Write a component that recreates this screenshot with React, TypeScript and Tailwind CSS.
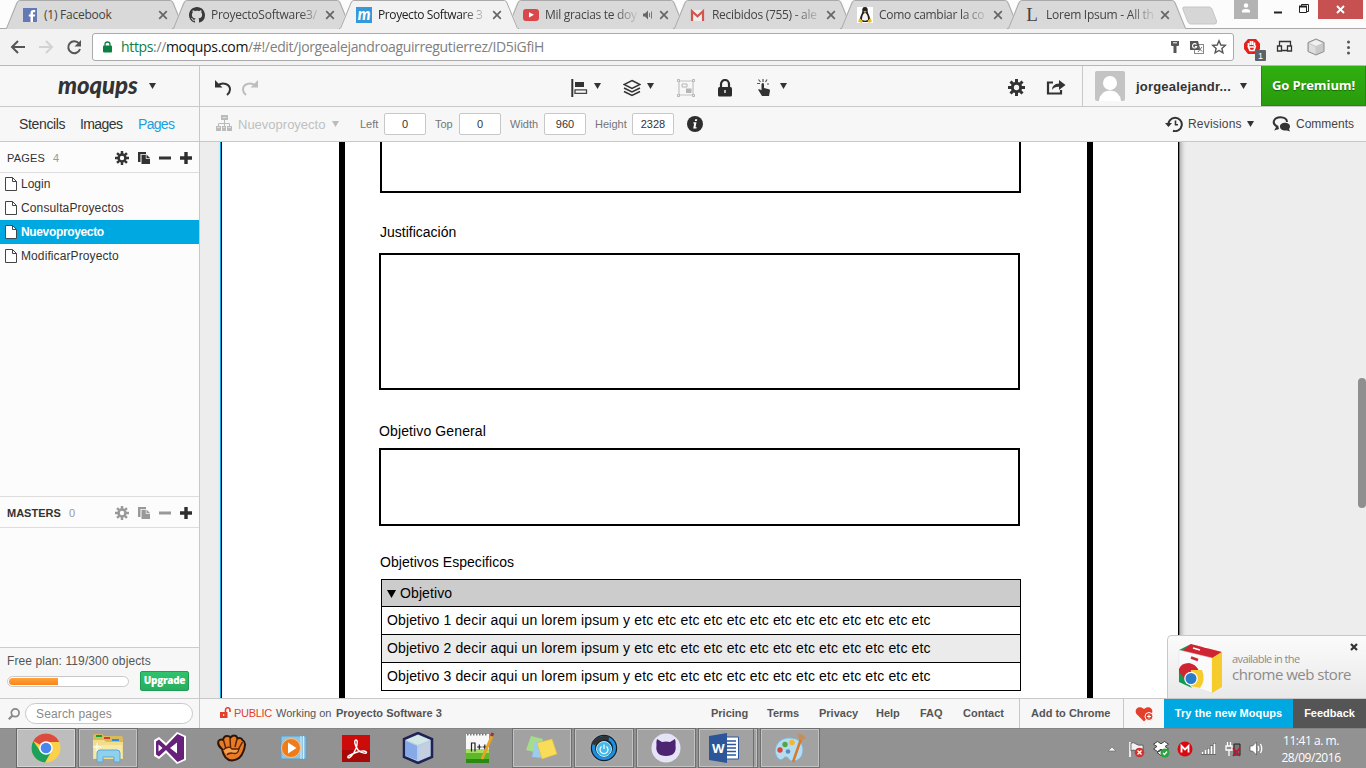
import React from "react";

type P = { children?: React.ReactNode };

const Svg = ({ w, h, children, cls = "" }: { w: number; h: number; cls?: string } & P) => (
  <svg width={w} height={h} viewBox={`0 0 ${w} ${h}`} fill="none" className={`block shrink-0 ${cls}`}>
    {children}
  </svg>
);

/* ---------- browser chrome ---------- */

const FacebookIcon = () => (
  <Svg w={16} h={16}>
    <rect x="1" y="1" width="14" height="14" fill="#6379b5" />
    <path d="M8.500 15V9.600H6.800V7.400h1.700V6c0-2 1-3 3-3h1.700v2.200h-1.200c-.8 0-1 .4-1 1v1.200h2.200l-.3 2.200h-1.900V15z" fill="#fff" />
  </Svg>
);
const GithubIcon = () => (
  <svg width="16" height="16" viewBox="0 0 16 16" className="block shrink-0" fill="#3a3a3a">
    <path d="M8 0C3.580 0 0 3.580 0 8c0 3.540 2.290 6.530 5.470 7.590.4.070.55-.17.55-.38 0-.19-.01-.82-.01-1.490-2.010.37-2.530-.49-2.690-.94-.09-.23-.48-.94-.82-1.130-.28-.15-.68-.52-.01-.53.63-.01 1.080.58 1.230.82.72 1.210 1.870.87 2.330.66.070-.52.28-.87.51-1.070-1.780-.2-3.640-.89-3.640-3.950 0-.87.31-1.590.82-2.150-.08-.2-.36-1.020.08-2.120 0 0 .67-.21 2.200.82.64-.18 1.320-.27 2-.27s1.360.09 2 .27c1.530-1.040 2.200-.82 2.200-.82.44 1.100.16 1.920.08 2.120.51.56.82 1.270.82 2.150 0 3.070-1.870 3.750-3.650 3.950.29.25.54.73.54 1.480 0 1.070-.01 1.930-.01 2.200 0 .21.15.46.55.38A8.010 8.010 0 0 0 16 8c0-4.420-3.580-8-8-8z" />
  </svg>
);
const MoqIcon = () => (
  <span className="flex h-4 w-4 shrink-0 items-center justify-center bg-[#3498db] pb-[2px] font-['Lato'] text-[16px] leading-none font-black text-white italic">m</span>
);
const YoutubeIcon = () => (
  <Svg w={16} h={16}>
    <rect x="0" y="2" width="16" height="12" rx="3" fill="#d9474b" />
    <path d="M6 5.200v5.200L11 7.800z" fill="#fff" />
  </Svg>
);
const GmailIcon = () => (
  <Svg w={16} h={16}>
    <path d="M1 3h13v11H1z" fill="#eee" />
    <path d="M2 14V4.200l5.500 5 5.500-5V14" stroke="#d1564c" strokeWidth="2.200" />
  </Svg>
);
const TuxIcon = () => (
  <Svg w={16} h={16}>
    <rect width="16" height="16" fill="#fff" />
    <path d="M8 0C5.500 0 5 2 5.300 4.500 5 7 3 8.500 3 12l2.500 3h5L13 12c0-3.500-2-5-2.300-7.500C11 2 10.500 0 8 0z" fill="#222" />
    <path d="M8 6c-2 0-3 4-3 6.500C5.500 14 10.500 14 11 12.500 11 10 10 6 8 6z" fill="#f5f5f5" />
    <path d="M6.300 4.500 8 6l1.700-1.500L8 3.800z" fill="#e8a713" />
    <path d="M1 14.500 2.500 11l3.500 3-1.500 2zM15 14.500 13.500 11 10.500 14l1.500 2z" fill="#f1bb1a" />
  </Svg>
);
const LIcon = () => (
  <span className="flex h-4 w-4 shrink-0 items-center justify-center font-['Liberation_Serif'] text-[19px] leading-none text-[#444]">L</span>
);

const Tab = ({ icon, text, active, sound, cls }: { icon: React.ReactNode; text: string; active?: boolean; sound?: boolean; cls: string }) => (
  <div className={`relative -mr-[13px] flex h-[29px] w-[180px] shrink-0 items-center pl-[17px] ${active ? "z-10" : ""}`}>
    <svg width="180" height="29" viewBox="0 0 180 29" className="absolute top-0 left-0" fill="none">
      <path d="M1 28.500 11 3Q12 .5 14 .5H166Q168 .5 169 3L179 28.500V29H1z" fill={active ? "#f2f2f2" : "#d9d9d9"} />
      <path d="M0 28.500H1.500L12 3Q13 .5 14.500 .5H165.500Q167 .5 168 3L178.500 28.500H180" stroke="#a9a9a9" />
      {active && <path d="M1.500 28.500H178.500" stroke="#f2f2f2" />}
    </svg>
    <div className="relative">{icon}</div>
    <div className={`relative ml-[6px] shrink-0 whitespace-nowrap font-['Open_Sans'] text-[12px] leading-[18px] ${sound ? "w-[92px]" : "w-[109px]"} ${active ? "text-[#222]" : "text-[#444]"}`}>
      <span className={cls}>{text}</span>
    </div>
    {sound && (
      <Svg w={12} h={10} cls="relative ml-[5px]">
        <path d="M1 3.500h2L6 .5v9L3 6.500H1z" fill="#666" />
        <path d="M7.500 3v4M9.500 1.500v7" stroke="#777" />
      </Svg>
    )}
    <Svg w={10} h={10} cls="relative ml-[5px]">
      <path d="M1.200 1.200 8.800 8.800M8.800 1.200 1.200 8.800" stroke="#666" strokeWidth="1.700" />
    </Svg>
  </div>
);

const TabStrip = () => (
  <div className="flex h-[29px] items-start border-b border-[#a9a9a9] bg-[#fcfcfc]">
    <div className="flex pl-[5px]">
      <Tab icon={<FacebookIcon />} text="(1) Facebook" cls="tracking-[-0.25px]" />
      <Tab icon={<GithubIcon />} text="ProyectoSoftware3/" cls="tracking-[-0.25px] [mask-image:linear-gradient(to_right,#000_85%,rgba(0,0,0,0.2))]" />
      <Tab icon={<MoqIcon />} text="Proyecto Software 3" active cls="tracking-[-0.4px] [mask-image:linear-gradient(to_right,#000_80%,rgba(0,0,0,0.2))]" />
      <Tab icon={<YoutubeIcon />} text="Mil gracias te doy" sound cls="tracking-[-0.3px] [mask-image:linear-gradient(to_right,#000_75%,rgba(0,0,0,0.1))]" />
      <Tab icon={<GmailIcon />} text="Recibidos (755) - ale" cls="tracking-[-0.3px] [mask-image:linear-gradient(to_right,#000_78%,rgba(0,0,0,0.2))]" />
      <Tab icon={<TuxIcon />} text="Como cambiar la co" cls="tracking-[-0.3px] [mask-image:linear-gradient(to_right,#000_78%,rgba(0,0,0,0.2))]" />
      <Tab icon={<LIcon />} text="Lorem Ipsum - All th" cls="tracking-[-0.25px] [mask-image:linear-gradient(to_right,#000_78%,rgba(0,0,0,0.1))]" />
    </div>
    <Svg w={36} h={19} cls="mt-[6px] ml-[8px]">
      <path d="M2 1h25q2 0 3 2l4.500 12q.5 3-2 3H9q-2 0-3-2L1 3.500Q0 1 2 1z" fill="#d6d6d6" stroke="#c6c6c6" />
    </Svg>
    <div className="ml-auto flex">
      <div className="flex h-[19px] w-[24px] justify-center bg-[#b3b3b3] pt-[3px]">
        <Svg w={10} h={10}>
          <circle cx="5" cy="2.500" r="2.200" fill="#fff" />
          <path d="M1 9.500V8q0-2 4-2t4 2v1.500z" fill="#fff" />
        </Svg>
      </div>
      <Svg w={60} h={19}>
        <path d="M16 12.500h8" stroke="#222" strokeWidth="2" />
        <path d="M41.500 6.500h7v6h-7zM43.500 6V4.500h7v7H49" stroke="#222" />
        <path d="M41 6.500h8" stroke="#222" strokeWidth="2" />
      </Svg>
      <div className="mr-[3px] flex h-[19px] w-[45px] items-center justify-center bg-[#c75050]">
        <Svg w={9} h={9}>
          <path d="M1 1 8 8M8 1 1 8" stroke="#fff" strokeWidth="1.900" />
        </Svg>
      </div>
    </div>
  </div>
);

const AddressBar = () => (
  <div className="flex h-[37px] items-start border-b border-[#b8b8b8] bg-[#f2f2f2] pt-[4px]">
    <Svg w={92} h={28}>
      <path d="M25 14H12M18 8l-6 6 6 6" stroke="#555" strokeWidth="2" />
      <path d="M39 14h13M46 8l6 6-6 6" stroke="#d2d2d2" strokeWidth="2" />
      <path d="M79 10.500A6 6 0 1 0 80 16" stroke="#555" strokeWidth="2" />
      <path d="M81 7v6.500h-6.500z" fill="#555" />
    </Svg>
    <div className="flex h-[28px] w-[1142px] items-center rounded-[3px] border border-[#aaa] bg-white pl-[10px]">
      <Svg w={9} h={12}>
        <rect x="0" y="4.500" width="9" height="7" rx="1" fill="#0b8043" />
        <path d="M2 5V3.500a2.500 2.500 0 0 1 5 0V5" stroke="#0b8043" strokeWidth="1.300" />
      </Svg>
      <div className="ml-[9px] w-[440px] whitespace-nowrap font-['Open_Sans'] text-[14px] leading-[20px] tracking-[-0.35px] text-[#808080]">
        <span className="text-[#0b8043]">https</span>://<span className="text-[#111]">moqups.com</span>/#!/edit/jorgealejandroaguirregutierrez/ID5iGfiH
      </div>
      <Svg w={60} h={16} cls="mr-[5px] ml-auto">
        <path d="M3 2h8v4q0 1-1 1H8.500v7h-3V7H4Q3 7 3 6z" fill="#555" />
        <path d="M5 3.800h4" stroke="#fff" />
        <rect x="26.500" y="5.500" width="9" height="9" fill="#fff" stroke="#888" />
        <path d="M22 2h8l2.500 9H22z" fill="#555" />
        <path d="M28.500 5.500a2.200 2.200 0 1 0 .3 2h-2" stroke="#fff" strokeWidth="1.100" />
        <path d="m29.500 7.500 4.500 5M34 8l-4 5" stroke="#777" />
        <path d="m51 1.800 1.800 4.200 4.500.4-3.400 3 1 4.500L51 11.500l-3.900 2.400 1-4.500-3.400-3 4.500-.4z" stroke="#555" strokeWidth="1.400" />
      </Svg>
    </div>
    <Svg w={130} h={30}>
      <path d="M14 6h8l4 4.500v5.500l-4 5h-8l-4-5v-5.500z" fill="#e3201b" />
      <path d="M14.500 13.500V10M16.500 12V8M18.500 12V8M20.500 13V9.500M14 13l2 4.500h4l1.500-5M15 14h5" stroke="#fff" strokeWidth="1.700" />
      <rect x="21" y="17" width="11" height="11" rx="1" fill="#5e6266" />
      <path d="M45.500 13V8.500h11V13M43.500 13h4v5h-4zM48 17.500h5.500M53.500 13h4v5h-4z" stroke="#333" strokeWidth="1.300" />
      <path d="m82 6 8 3.500v9L82 22l-8-3.500v-9z" fill="#c9c9c9" stroke="#8d8d8d" />
      <path d="m82 7 6.500 3-6.500 3-6.500-3z" fill="#f1f1f1" />
      <path d="M75 11l6.500 3v7L75 18z" fill="#dedede" />
      <circle cx="114.500" cy="9" r="1.500" fill="#555" /><circle cx="114.500" cy="14.500" r="1.500" fill="#555" /><circle cx="114.500" cy="20" r="1.500" fill="#555" />
      <text x="24" y="26" fontSize="9" fontFamily="Liberation Sans" fill="#fff">1</text>
    </Svg>
  </div>
);

/* ---------- app icons ---------- */

const Caret = ({ c = "#333", cls = "" }: { c?: string; cls?: string }) => (
  <Svg w={7} h={6} cls={cls}><path d="M0 0h7L3.500 6z" fill={c} /></Svg>
);

const Gear = ({ s, c, cls = "" }: { s: number; c: string; cls?: string }) => (
  <svg width={s} height={s} viewBox="-8 -8 16 16" className={`block shrink-0 ${cls}`} fill="none" stroke={c}>
    <circle r="3.900" strokeWidth="2.800" />
    {[0, 45, 90, 135].map((a) => (
      <path key={a} d="M0-8V-4.500M0 4.500V8" strokeWidth="2.800" transform={`rotate(${a})`} />
    ))}
  </svg>
);

const CopyIcon = ({ c }: { c: string }) => (
  <Svg w={12} h={12}>
    <path d="M0 0h8v2H2.500v8H0z" fill={c} />
    <path d="M3.500 2.800h4.300v4H12V12H3.500z" fill={c} />
    <path d="M8.500 2.500 12 6H8.500z" fill={c} />
  </Svg>
);
const Minus = ({ c }: { c: string }) => <Svg w={12} h={12}><path d="M0 4.500h12v3H0z" fill={c} /></Svg>;
const Plus = () => <Svg w={12} h={12}><path d="M4.300 0h3.400v4.300H12v3.400H7.700V12H4.300V7.700H0V4.300h4.300z" fill="#2e2e2e" /></Svg>;

const PageIcon = ({ active }: { active?: boolean }) => (
  <Svg w={12} h={14}>
    <path d="M.5.5h7l4 4v9H.5z" fill="#fff" stroke={active ? "#3a4a55" : "#444"} />
    <path d="M7.500.5v4h4" stroke={active ? "#3a4a55" : "#444"} />
  </Svg>
);

/* ---------- app bars ---------- */

const Header = () => (
  <div className="flex h-[41px] border-b border-[#c8c8c8] bg-[#f7f7f7]">
    <div className="flex w-[200px] items-center border-r border-[#c8c8c8] pl-[58px]">
      <div className="w-[80px] pb-[3px] font-['Lato'] text-[24px] leading-none font-black tracking-[-0.1px] text-[#333] italic">moqups</div>
      <Caret cls="ml-[11px]" />
    </div>
    <div className="flex flex-1 items-center pt-[3px]">
      <Svg w={18} h={16} cls="ml-[14px]">
        <path d="M3.500 5.500C9 1.500 16 4 16 9.500c0 2-1 3.800-3 5.500" stroke="#333" strokeWidth="2" />
        <path d="M1 0v7.500h7.500z" fill="#333" />
      </Svg>
      <Svg w={18} h={16} cls="ml-[9px]">
        <path d="M14.500 5.500C9 1.500 2 4 2 9.500c0 2 1 3.800 3 5.500" stroke="#bdbdbd" strokeWidth="2" />
        <path d="M17 0v7.500H9.500z" fill="#bdbdbd" />
      </Svg>
      <Svg w={18} h={18} cls="ml-[312px]">
        <path d="M1.300 0v18" stroke="#333" strokeWidth="2" />
        <path d="M4 3h9v5H4z" fill="#333" />
        <path d="M4 10.800h11.500v3.500H4z" stroke="#444" strokeWidth="1.300" />
      </Svg>
      <Caret cls="mb-[3px] ml-[5px]" />
      <Svg w={18} h={18} cls="ml-[22px]">
        <path d="m9 1.500 8 4-8 4-8-4z" stroke="#333" strokeWidth="1.400" />
        <path d="m1 9 8 4 8-4M1 12.500l8 4 8-4" stroke="#333" strokeWidth="1.500" />
      </Svg>
      <Caret cls="mb-[3px] ml-[6px]" />
      <Svg w={18} h={18} cls="ml-[23px]">
        <path d="M2 2h14v14H2z" stroke="#c2c2c2" strokeWidth="1.200" />
        <path d="M.5.5h2v2h-2zM15.500.5h2v2h-2zM.5 15.500h2v2h-2zM15.500 15.500h2v2h-2z" fill="#f7f7f7" stroke="#b5b5b5" />
        <path d="M5 5h5v3H5z" stroke="#b5b5b5" />
        <path d="M9 9.500h5.500V14H9z" fill="#b5b5b5" />
      </Svg>
      <Svg w={14} h={18} cls="ml-[23px]">
        <rect x="0" y="8" width="14" height="9.500" rx="1.500" fill="#2b2b2b" />
        <path d="M3 9V5a4 4 0 0 1 8 0v4" stroke="#2b2b2b" strokeWidth="2.200" />
        <path d="M7 11v3" stroke="#ddd" strokeWidth="1.600" />
      </Svg>
      <Svg w={16} h={19} cls="ml-[24px]">
        <path d="M7 1v3M2.500 1.500l2 2.500M11 1.500 9.500 4M1 5.500h3M11 6h2" stroke="#555" strokeWidth="1.200" />
        <path d="M5.500 6q1.500-2 2.500 0v4l5 1.200q1 .4 1 1.500l-1 5.300H6L2 11.500q1-1 3.500.7z" fill="#333" />
      </Svg>
      <Caret cls="mb-[3px] ml-[8px]" />
      <Gear s={17} c="#333" cls="ml-[221px]" />
      <Svg w={20} h={15} cls="ml-[21px]">
        <path d="M7 2.500H2v11h13V10" stroke="#333" strokeWidth="2.200" />
        <path d="M6 10q0-6 7-6.500V0l6.500 5-6.500 5V6.800Q8.500 6.500 6 10z" fill="#333" />
      </Svg>
    </div>
    <div className="flex w-[179px] items-center border-l border-[#c8c8c8] pl-[12px]">
      <Svg w={30} h={30}>
        <rect width="30" height="30" rx="2" fill="#c4c4c4" />
        <circle cx="15" cy="12" r="7" fill="#fff" />
        <path d="M4 30q1-10 11-10.500Q25 20 26 30z" fill="#fff" />
      </Svg>
      <div className="ml-[11px] w-[97px] whitespace-nowrap text-[13px] leading-none font-bold tracking-[0.2px] text-[#333]">jorgealejandr...</div>
      <Caret cls="ml-[7px]" />
    </div>
    <div className="flex h-[40px] w-[105px] items-center justify-center border border-t-0 border-[#238a0a] bg-linear-to-b from-[#2fb010] to-[#299b0d] font-['Open_Sans'] text-[13px] leading-none font-bold tracking-[-0.1px] whitespace-nowrap text-white [text-shadow:0_1px_1px_rgba(0,0,0,0.4)]">Go Premium!</div>
  </div>
);

const Field = ({ label, value, cls }: { label: string; value: string; cls: string }) => (
  <div className="flex items-center">
    <div className={`text-[11px] leading-none whitespace-nowrap text-[#757575] ${cls}`}>{label}</div>
    <div className="flex h-[22px] w-[42px] items-center justify-center rounded-[2px] border border-[#c8c8c8] bg-white text-[11px] text-[#333]">{value}</div>
  </div>
);

const SubBar = () => (
  <div className="flex h-[35px] border-b border-[#c8c8c8] bg-[#f7f7f7]">
    <div className="flex w-[200px] items-center border-r border-[#c8c8c8] pl-[19px] text-[14px] leading-none text-[#333]">
      <div className="w-[61px] tracking-[-0.35px]">Stencils</div>
      <div className="w-[58px] tracking-[-0.6px]">Images</div>
      <div className="tracking-[-0.7px] text-[#1a9fe0]">Pages</div>
    </div>
    <div className="flex flex-1 items-center">
      <Svg w={16} h={16} cls="mb-[2px] ml-[16px]">
        <path d="M5 0h7v5H5zM0 11h5v5H0zM6 11h4v5H6zM11 11h5v5h-5z" fill="#bbb" />
        <path d="M8.500 5v6M2.500 11V8.500h11V11" stroke="#bbb" />
        <path d="M6.500 2.500h4M1 12.500h3M7 12.500h2M12 12.500h3" stroke="#ddd" />
      </Svg>
      <div className="ml-[6px] w-[94px] text-[13px] leading-none text-[#c0c0c0]">Nuevoproyecto</div>
      <Caret c="#bbb" />
      <div className="ml-[21px] flex gap-[9px]">
        <Field label="Left" value="0" cls="w-[24px]" />
        <Field label="Top" value="0" cls="w-[24px]" />
        <Field label="Width" value="960" cls="w-[34px]" />
        <Field label="Height" value="2328" cls="w-[37px]" />
      </div>
      <Svg w={16} h={16} cls="ml-[13px]">
        <circle cx="8" cy="8" r="8" fill="#2e2e2e" />
        <path d="M8.200 3.200h2l-.4 1.900h-2zM6.500 6.300h3l-1 5h1.200l-.2 1.200H6.200l1-5H6.200z" fill="#fff" />
      </Svg>
      <Svg w={18} h={16} cls="ml-auto">
        <path d="M3.500 9.500A6.700 6.700 0 1 1 8 14.800" stroke="#333" strokeWidth="2" />
        <path d="M0 7h7l-3.500 4z" fill="#333" />
        <path d="M10.500 4.500v4.200H13" stroke="#333" strokeWidth="1.600" />
      </Svg>
      <div className="ml-[5px] w-[59px] text-[12px] leading-none tracking-[0.2px] text-[#444]">Revisions</div>
      <Caret />
      <Svg w={19} h={16} cls="ml-[18px]">
        <path d="M4.500 13 5 10.500C-1 7 2 1.200 8.500 1.200c4 0 6.500 2 6.500 4.800" stroke="#333" strokeWidth="2" />
        <path d="M2 14.500 6 9l1 4z" fill="#333" />
        <path d="M8 10.500c0-5 10-5 10 0 0 1.500-1 2.500-1 2.500l1 2.500-3-1c-4 .5-7-1-7-4z" fill="#333" />
      </Svg>
      <div className="mr-[11px] ml-[5px] w-[59px] text-[12px] leading-none text-[#444]">Comments</div>
    </div>
  </div>
);

/* ---------- sidebar ---------- */

const SectionHead = ({ title, count, c, cls }: { title: string; count: string; c: string; cls: string }) => (
  <div className="flex h-[31px] shrink-0 items-center border-b border-[#ddd] pt-[2px] pr-[7px] pl-[7px]">
    <div className={`text-[11px] leading-none whitespace-nowrap text-[#333] ${cls}`}>{title}</div>
    <div className="text-[11px] leading-none text-[#999]">{count}</div>
    <div className="ml-auto flex items-center gap-[9px]">
      <Gear s={14} c={c} />
      <CopyIcon c={c} />
      <Minus c={c} />
      <Plus />
    </div>
  </div>
);

const SideItem = ({ name, active, cls }: { name: string; active?: boolean; cls: string }) => (
  <div className={`flex shrink-0 items-center pl-[5px] text-[12px] leading-none ${active ? "bg-[#00a8e1] font-bold text-white" : "text-[#333]"} ${cls}`}>
    <PageIcon active={active} />
    <span className="ml-[4px]">{name}</span>
  </div>
);

const Sidebar = () => (
  <div className="flex w-[200px] shrink-0 flex-col border-r border-[#c8c8c8] bg-[#fcfcfc]">
    <SectionHead title="PAGES" count="4" c="#333" cls="w-[46px] font-medium tracking-[0.2px]" />
    <SideItem name="Login" cls="h-[23px] pb-[2px]" />
    <SideItem name="ConsultaProyectos" cls="h-[24px] tracking-[0.13px]" />
    <SideItem name="Nuevoproyecto" active cls="h-[24px] tracking-[-0.35px]" />
    <SideItem name="ModificarProyecto" cls="h-[24px] tracking-[0.1px]" />
    <div className="mt-auto border-t border-[#ddd]">
      <SectionHead title="MASTERS" count="0" c="#999" cls="w-[62px] font-bold tracking-[0px]" />
      <div className="h-[119px]" />
    </div>
    <div className="h-[51px] shrink-0 border-t border-[#ccc] bg-[#f7f7f7] pt-[7px] pl-[7px]">
      <div className="text-[12px] leading-[12px] tracking-[0.1px] text-[#555]">Free plan: 119/300 objects</div>
      <div className="mt-[4px] flex items-center">
        <div className="h-[11px] w-[122px] rounded-full border border-[#c8c8c8] bg-white p-px">
          <div className="h-[7px] w-[49px] rounded-l-full rounded-r-[2px] bg-linear-to-b from-[#ffa13a] to-[#f98616]" />
        </div>
        <div className="ml-[11px] flex h-[20px] w-[49px] items-center justify-center rounded-[2px] border border-[#1f9c53] bg-linear-to-b from-[#2fc36c] to-[#27ae60] pb-[2px] font-['Open_Sans'] text-[10px] leading-none font-extrabold tracking-[-0.3px] text-white">Upgrade</div>
      </div>
    </div>
    <div className="flex h-[30px] shrink-0 items-center border-t border-[#ccc] bg-[#f7f7f7] pl-[8px]">
      <Svg w={12} h={12}>
        <circle cx="7.200" cy="4.800" r="3.900" stroke="#888" strokeWidth="1.700" />
        <path d="M4.500 7.500.8 11.200" stroke="#888" strokeWidth="2.200" />
      </Svg>
      <div className="ml-[5px] flex h-[21px] w-[168px] items-center rounded-full border border-[#c8c8c8] bg-white pl-[10px] text-[12px] leading-none tracking-[0.15px] text-[#8a8a8a]">Search pages</div>
    </div>
  </div>
);

/* ---------- canvas ---------- */

const rows = ["Objetivo 1", "Objetivo 2", "Objetivo 3"];

const Canvas = () => (
  <div className="relative flex-1 overflow-hidden bg-[#ededed] text-[14px] leading-none text-black">
    <div className="absolute top-[-40px] left-[20px] h-[660px] w-[960px] border-x border-[#00a8e1] bg-white shadow-[2px_0_4px_rgba(0,0,0,0.25)]">
      <div className="h-full border-x border-black" />
    </div>
    <div className="absolute top-[-10px] left-[139px] h-[600px] w-[754px] border-x-6 border-black" />
    <div className="absolute top-[-20px] left-[180px] h-[71px] w-[641px] border-2 border-black bg-white" />
    <div className="absolute top-[83px] left-[180px]">Justificación</div>
    <div className="absolute top-[111px] left-[179px] h-[137px] w-[641px] border-2 border-black bg-white" />
    <div className="absolute top-[282px] left-[179px] tracking-[0.12px]">Objetivo General</div>
    <div className="absolute top-[306px] left-[179px] h-[78px] w-[641px] border-2 border-black bg-white" />
    <div className="absolute top-[413px] left-[180px] tracking-[0.05px]">Objetivos Especificos</div>
    <div className="absolute top-[437px] left-[181px] w-[640px] border border-black bg-white">
      <div className="flex h-[26px] items-center bg-[#ccc] pl-[5px]">
        <Svg w={9} h={8} cls="mt-[2px]"><path d="M0 0h9L4.500 8z" fill="#000" /></Svg>
        <span className="ml-[4px] tracking-[0.1px]">Objetivo</span>
      </div>
      {rows.map((r, i) => (
        <div key={r} className={`flex h-[28px] items-center border-t border-black pb-[2px] pl-[5px] tracking-[0.135px] whitespace-nowrap ${i === 1 ? "bg-[#ebebeb]" : "bg-white"}`}>
          {r} decir aqui un lorem ipsum y etc etc etc etc etc etc etc etc etc etc etc etc etc
        </div>
      ))}
    </div>
    <div className="absolute top-[236px] right-0 h-[130px] w-[8px] rounded-[4px] bg-[#8f8f8f]" />
    <div className="absolute right-0 bottom-0 flex h-[63px] w-[199px] rounded-tl-[5px] border-t border-l border-[#c8c8c8] bg-linear-to-b from-[#fbfbfb] to-[#e9e9e9]">
      <Svg w={50} h={56} cls="mt-[4px] ml-[8px]">
        <path d="M3 10 15 4v8L3 14z" fill="#119b50" />
        <path d="M15 4 46 12 35 19 6 11z" fill="#cf2533" />
        <path d="M17 8l7 2M26 6l6 1.500" stroke="#fff" strokeWidth="1.500" />
        <path d="M3 10 36 18V53L3 42z" fill="#fafafa" stroke="#ddd" strokeWidth=".5" />
        <path d="M36 18 46 12v35l-10 6z" fill="#f6cb2c" />
        <path d="M15 17.500l7 2.500" stroke="#cf2533" strokeWidth="2.400" />
        <path d="M3 29q2-6 10-6 7 1 10 8l-8 2-6 9-6-4z" fill="#cf2533" />
        <path d="M15 30h11q4 10-2 18l-9-2z" fill="#f6cb2c" />
        <path d="M3 32l8 10 5 6-13-6z" fill="#119b50" />
        <circle cx="15" cy="38.500" r="6.800" fill="#fff" /><circle cx="15" cy="38.500" r="5.500" fill="#2c7bc9" />
      </Svg>
      <div className="ml-[6px] pt-[17px] font-['Open_Sans'] whitespace-nowrap text-[#8b8b8b]">
        <div className="text-[11px] leading-[12px] tracking-[-0.6px]">available in the</div>
        <div className="text-[15px] leading-[18px] tracking-[-0.5px]">chrome web store</div>
      </div>
      <Svg w={8} h={8} cls="absolute top-[7px] right-[8px]"><path d="M1 1 7 7M7 1 1 7" stroke="#333" strokeWidth="2.200" /></Svg>
    </div>
  </div>
);

const Footer = () => (
  <div className="flex h-[30px] items-center border-t border-[#c8c8c8] bg-[#f7f7f7] text-[11px] leading-none font-bold whitespace-nowrap text-[#555]">
    <Svg w={11} h={11} cls="mb-[3px] ml-[20px]">
      <path d="M0 5h7.500v6H0z" fill="#e2402a" />
      <path d="M5.500 5V3a2.200 2.200 0 0 1 4.500 0v2" stroke="#e2402a" strokeWidth="1.600" />
      <path d="M3.700 7v2" stroke="#fff" />
    </Svg>
    <div className="ml-[3px] w-[42px] font-normal tracking-[-0.3px] text-[#e2402a]">PUBLIC</div>
    <div className="w-[60px] font-normal">Working on</div>
    <div>Proyecto Software 3</div>
    <div className="ml-auto flex h-full items-center">
      <div className="w-[56px]">Pricing</div>
      <div className="w-[52px]">Terms</div>
      <div className="w-[57px]">Privacy</div>
      <div className="w-[44px]">Help</div>
      <div className="w-[43px]">FAQ</div>
      <div className="w-[56px]">Contact</div>
    </div>
    <div className="flex h-full w-[105px] items-center border-x border-[#c8c8c8] pl-[11px]">Add to Chrome</div>
    <Svg w={18} h={16} cls="mx-[11px]">
      <path d="M9 15.500 1.500 8C-1.500 3 4-1.500 9 3c5-4.500 10.500 0 7.500 5z" fill="#e2402a" />
      <circle cx="14" cy="10.500" r="4" fill="#e2402a" stroke="#fff" />
      <path d="M14 8.500v4M12 10.500h4" stroke="#fff" />
    </Svg>
    <div className="flex h-full w-[129px] items-center justify-center bg-[#00a8e1] tracking-[0.1px] text-white">Try the new Moqups</div>
    <div className="flex h-full w-[73px] items-center justify-center bg-[#555] text-white">Feedback</div>
  </div>
);

/* ---------- taskbar ---------- */

const Slot = ({ open, focus, children }: { open?: boolean; focus?: boolean } & P) => (
  <div className={`mx-px flex h-[40px] w-[60px] shrink-0 items-center justify-center ${open ? "border shadow-[inset_0_0_0_1px_rgba(255,255,255,0.35)] " : ""}${focus ? "border-[#666] bg-[#bdbdbd]" : open ? "border-[#6f6f6f] bg-[#a2a2a2]" : ""}`}>
    {children}
  </div>
);

const ChromeIcon = () => (
  <Svg w={30} h={30}>
    <circle cx="15" cy="15" r="14.500" fill="#fbd04a" />
    <path d="M15 15 2.300 8A14.500 14.500 0 0 1 27.700 8L28 9H15z" fill="#dd4b3e" />
    <path d="M2.300 8A14.500 14.500 0 0 0 14 29.500L20.500 18 15 15 9 18z" fill="#1da05c" />
    <circle cx="15" cy="15" r="6.800" fill="#fff" /><circle cx="15" cy="15" r="5.300" fill="#4a86f0" />
  </Svg>
);
const ExplorerIcon = () => (
  <Svg w={32} h={32}>
    <path d="M1 4q0-2 2-2h7l2 2h17q2 0 2 2v20H1z" fill="#d9b95b" />
    <path d="M4 3h6v2H4z" fill="#12a02c" /><path d="M12 5h6v2h-6z" fill="#d83a2c" /><path d="M20 7h7v2h-7z" fill="#2c8fd8" />
    <path d="M1 8h11l2 2h17v17H1z" fill="#f2dd8a" />
    <path d="M2 13h28v13H2z" fill="#f7e9ab" />
    <path d="M5 30V21q0-3 3-3h17q3 0 3 3v9h-6v-5H11v5z" fill="#8fd0ee" stroke="#5aa7d0" />
    <path d="M5 11v8M1 15h8" stroke="#fff" />
  </Svg>
);
const VsIcon = () => (
  <Svg w={34} h={34}>
    <path d="M1 9 6 6l7 6L24 1l9 4v24l-9 4-11-11-7 6-5-3z" fill="#fff" />
    <path fillRule="evenodd" d="M3 10.500 6 8.500l7 6.500L24.500 3l6.500 3v22l-6.500 3L13 19l-7 6.500L3 23.500zM5.500 13.500v7L9.500 17zM24 11.500 17 17l7 5.500z" fill="#68217a" />
  </Svg>
);
const FistIcon = () => (
  <Svg w={30} h={28}>
    <path d="M5 15Q0 11 1.500 7q2-2.500 4.500-1Q7 1.500 10.500 2q2 0 3 1.500Q16 .5 19 2q1 1 1.500 2.500Q24 3 25.500 6q3 2 2.500 5-.5 4-1.500 6-3 9-11.500 9.500Q7 26 5 15z" fill="#ea7a24" stroke="#2c1608" strokeWidth="2" />
    <path d="M6.500 6 9 15M13 4l.5 9M20 5l-2 8M25.500 8l-4 7" stroke="#5a240a" strokeWidth="1.500" />
    <path d="M6 16q6-5 9-1l7 0q-1 6-7 4-4 0-5 2" stroke="#5a240a" strokeWidth="1.300" fill="#f6a04a" />
  </Svg>
);
const WmpIcon = () => (
  <Svg w={28} h={26}>
    <path d="M1 1h25v23H1z" fill="#8fc5e4" stroke="#5e9cc2" />
    <path d="M21 1v23M23.500 1v23" stroke="#d4ecf8" />
    <circle cx="11" cy="13" r="9.500" fill="#ee7c1b" stroke="#f9c48c" /><path d="M8 7.500v11l8.500-5.500z" fill="#fff" />
  </Svg>
);
const PdfIcon = () => (
  <Svg w={28} h={27}>
    <rect width="28" height="27" fill="#cc0b0b" /><path d="M0 15h28v12H0z" fill="#8e0606" opacity=".6" />
    <path d="M14 5c-2.500 0-1 6 2 10 3 3 8 4 8.500 2.500S20 15 14 17.500 5 21 6 22.500s5-2 7.500-8S15.500 5 14 5z" stroke="#fff" strokeWidth="1.400" />
  </Svg>
);
const CubeIcon = () => (
  <Svg w={32} h={32}>
    <path d="m16 1 14 6v18l-14 6L2 25V7z" fill="#b8cbe8" stroke="#1f2252" strokeWidth="2.500" />
    <path d="m16 3 12 5-12 5L4 8z" fill="#d3e8e4" /><path d="M4 9l11 5v14L4 24z" fill="#86a9e8" /><path d="M28 9l-11 5v14l11-4z" fill="#c3cfde" />
  </Svg>
);
const NppIcon = () => (
  <Svg w={30} h={32}>
    <path d="M1 2h23v29H1z" fill="#f8f8f8" /><path d="M1 17h23v14H1z" fill="#a4de62" /><path d="M1 21h23v10H1z" fill="#5cb82a" /><path d="M1 27h23v4H1z" fill="#2c8a12" />
    <path d="M2 2.500h21" stroke="#777" strokeDasharray="1.500 1.500" strokeWidth="2" />
    <path d="M6.500 19.500v-8.500h3.500v8.500M12 15h4.500M14.300 12.500v5M17.500 15H22M19.800 12.500v5" stroke="#222" strokeWidth="1.200" />
    <path d="M27 4 17 27" stroke="#e7a321" strokeWidth="3" /><path d="m26.500 4 1.300-3" stroke="#a12d2d" strokeWidth="3" />
  </Svg>
);
const StickyIcon = () => (
  <Svg w={32} h={26}>
    <path d="m5 1 12 3-4 14L0 15z" fill="#a6dd8c" /><path d="m9 6 11 1-2 16-12-1z" fill="#9bcbef" />
    <path d="m11 8 15-4 5 15-15 5z" fill="#f9dc58" stroke="#e0bd38" strokeWidth=".6" />
  </Svg>
);
const PowerIcon = () => (
  <Svg w={30} h={30}>
    <circle cx="15" cy="15" r="14" fill="#15202b" stroke="#a5a9ac" strokeWidth="1.500" />
    <circle cx="15" cy="15" r="10.500" stroke="#1c8fe0" strokeWidth="3" /><path d="M4 11Q10 4 20 5" stroke="#333" strokeWidth="4" />
    <circle cx="15" cy="16" r="7.500" fill="#43b9ec" stroke="#c5e6f5" /><path d="M12.500 13.500a4 4 0 1 0 5 0M15 11.500v4.500" stroke="#fff" strokeWidth="1.200" />
  </Svg>
);
const CatIcon = () => (
  <Svg w={30} h={30}>
    <circle cx="15" cy="15" r="14.500" fill="#e4e4f6" />
    <path d="M6 6l5 3q4-1 8 0l5-3q1 3 0.500 6Q26 23 15 23T5.500 12Q5 9 6 6z" fill="#4c2472" />
  </Svg>
);
const WordIcon = () => (
  <Svg w={30} h={30}>
    <path d="M16 4h13.500v22H16z" fill="#fff" stroke="#2b579a" />
    <path d="M18 8h9M18 11.500h9M18 15h9M18 18.500h9M18 22h9" stroke="#2b579a" strokeWidth="1.300" />
    <path d="M0 3 18 0v30L0 27z" fill="#2b579a" />
    <text x="3" y="20" fontSize="13" fontWeight="bold" fontFamily="Open Sans" fill="#fff">W</text>
  </Svg>
);
const PaintIcon = () => (
  <Svg w={34} h={32}>
    <path d="M2 20C2 10 10 5 18 6c8 0 12 6 12 12s-4 12-12 11c-3-1-2-4-5-4s-2 3-6 3q-4-2-5-8z" fill="#b5dcf0" stroke="#7fb2cf" />
    <circle cx="7" cy="18" r="2.700" fill="#d9483b" /><circle cx="12" cy="12.500" r="2.700" fill="#54a843" /><circle cx="19" cy="10.500" r="2.800" fill="#f2b632" /><circle cx="15" cy="19.500" r="2.300" fill="#5a8fb8" />
    <path d="M28 7 20 30" stroke="#d87a2a" strokeWidth="2.500" /><path d="M24 1q2 2 5 1l4 4q-3 2-5 2-3-2-4-7z" fill="#c98d55" />
  </Svg>
);

const Taskbar = () => (
  <div className="flex h-[40px] bg-[#929292] pl-[15px] shadow-[inset_0_1px_0_#848484]">
    <Slot open focus><ChromeIcon /></Slot>
    <Slot open><ExplorerIcon /></Slot>
    <Slot><VsIcon /></Slot>
    <Slot><FistIcon /></Slot>
    <Slot><WmpIcon /></Slot>
    <Slot><PdfIcon /></Slot>
    <Slot><CubeIcon /></Slot>
    <Slot><NppIcon /></Slot>
    <Slot open><StickyIcon /></Slot>
    <Slot open><PowerIcon /></Slot>
    <Slot open><CatIcon /></Slot>
    <Slot open>
      <div className="mr-[3px] flex h-full w-full items-center border-r border-[#6f6f6f] pl-[10px]"><WordIcon /></div>
    </Slot>
    <Slot open><PaintIcon /></Slot>
    <Svg w={156} h={20} cls="mt-[11px] ml-auto">
      <path d="M1 12h8L5 8z" fill="#f2f2f2" stroke="#666" strokeWidth=".6" />
      <path d="M23 3v15" stroke="#fff" strokeWidth="1.600" /><path d="M24 4q3-1 5 1t7 1v7q-4 1-7-1t-5 0z" fill="#f2f2f2" stroke="#444" strokeWidth=".7" />
      <circle cx="32.500" cy="13.500" r="4.800" fill="#d1332c" /><path d="m30.500 11.500 4 4M34.500 11.500l-4 4" stroke="#fff" strokeWidth="1.400" />
      <path d="m50.500 2.500 3.500 2.300 3.500-2.300 4 2.700-3.500 2.300 3.500 2.500-4 2.500-3.500-2.300-3.500 2.300-4-2.500 3.500-2.500-3.500-2.300zM50 13.500l4-2 4 2-4 3z" fill="#fff" stroke="#333" strokeWidth=".9" />
      <circle cx="58" cy="14" r="4.500" fill="#29a33a" /><path d="m56 14 1.500 1.500 2.500-3" stroke="#fff" strokeWidth="1.300" />
      <circle cx="78" cy="10" r="7.500" fill="#d9090f" /><path d="M74.500 13.500V7l3.500 3.500L81.500 7v6.500" stroke="#fff" strokeWidth="1.800" />
      <path d="M95.500 15.500v-2.500M98.500 15.500v-4.500M101.500 15.500V9M104.500 15.500V6.500M107.500 15.500V4" stroke="#444" strokeWidth="3" /><path d="M95.500 15v-2M98.500 15v-4M101.500 15V9.500M104.500 15V7M107.500 15V4.500" stroke="#fff" strokeWidth="2" />
      <path d="M120.500 3v4M123.500 3v4M119 7h6v4h-6zM122 11v6" stroke="#fff" strokeWidth="1.300" /><path d="M127 5h6v11h-6z" fill="#777" stroke="#222" /><path d="m126 9 7 8M133 9l-7 8" stroke="#c8102e" strokeWidth="1.800" />
      <path d="M143 7h2.500l4-4v13l-4-4H143z" fill="#fff" stroke="#444" strokeWidth=".6" /><path d="M151 7q1.500 2.500 0 5M153.500 5q2.500 4.500 0 9" stroke="#fff" strokeWidth="1.300" />
    </Svg>
    <div className="mr-[18px] ml-[11px] w-[74px] pt-[4px] text-center font-['Open_Sans'] text-[12px] leading-[17px] tracking-[-0.45px] whitespace-nowrap text-white">
      <div>11:41 a. m.</div>
      <div>28/09/2016</div>
    </div>
  </div>
);

export default function App() {
  return (
    <div className="flex h-[768px] w-[1366px] flex-col overflow-hidden font-['Liberation_Sans',sans-serif]">
      <TabStrip />
      <AddressBar />
      <Header />
      <SubBar />
      <div className="flex min-h-0 flex-1">
        <Sidebar />
        <div className="flex min-w-0 flex-1 flex-col">
          <Canvas />
          <Footer />
        </div>
      </div>
      <Taskbar />
    </div>
  );
}
